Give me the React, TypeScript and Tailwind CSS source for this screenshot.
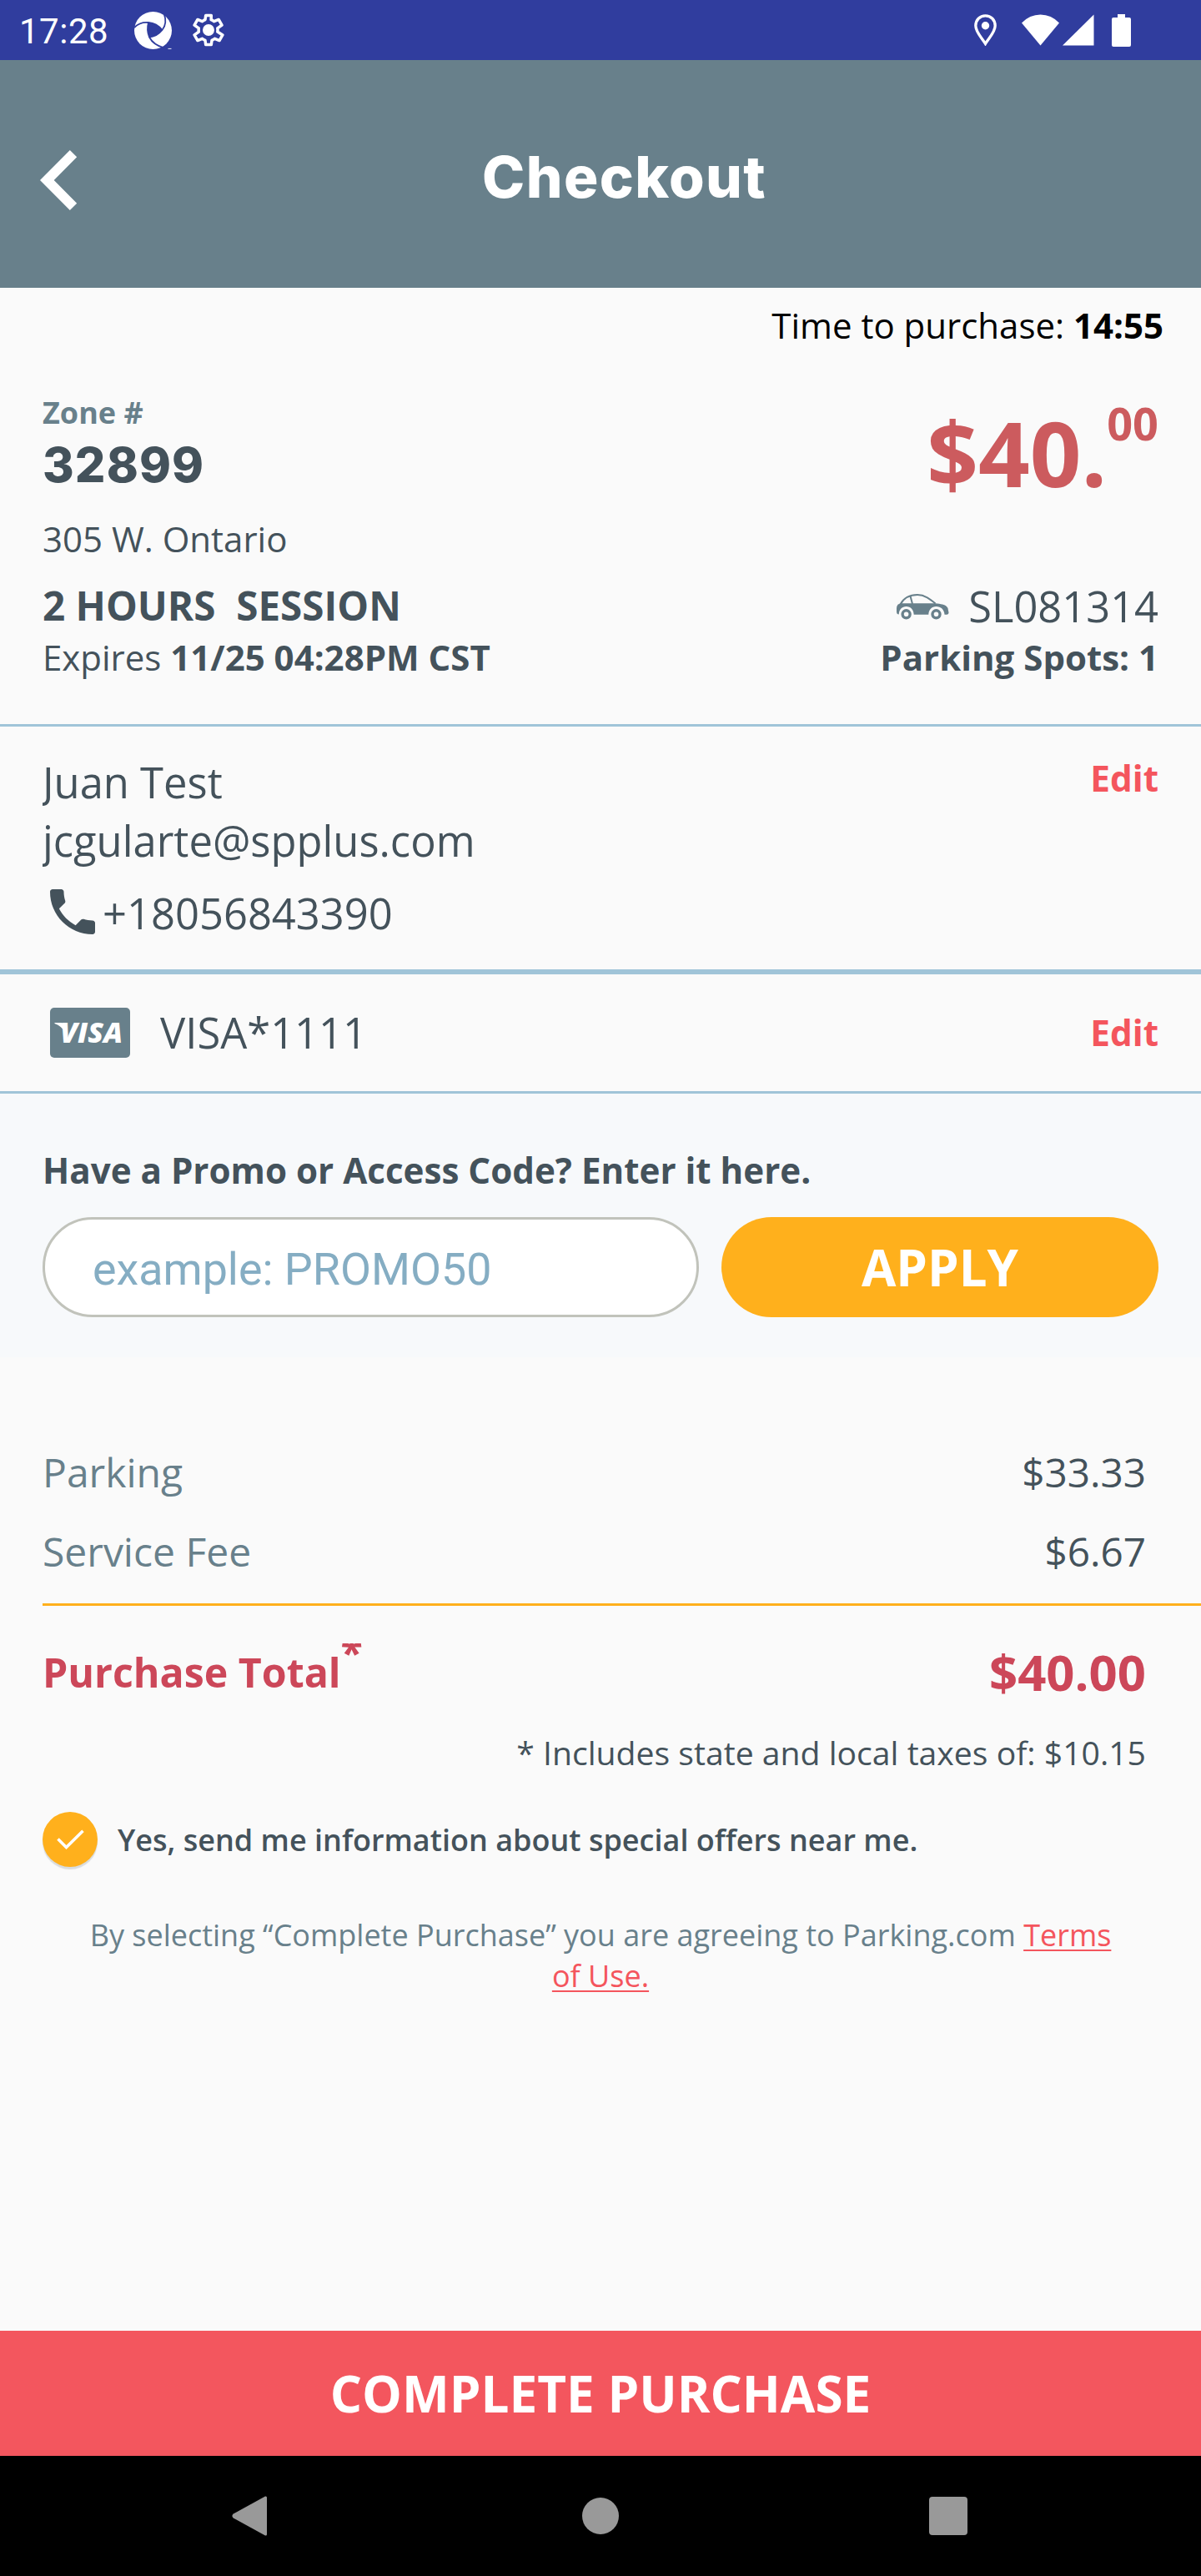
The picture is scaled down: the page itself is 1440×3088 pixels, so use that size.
import { MdPhone } from "react-icons/md";

function SwirlLogo() {
  return (
    <svg viewBox="0 0 46 45" className="h-[45px] w-[46px]" fill="none">
      <circle cx="22.5" cy="22.5" r="22.5" fill="#fff" />
      <path d="M17 13.5Q27 14 33.5 22Q27 30 18 30.5Q14.5 22 17 13.5Z" fill="#303d9e" />
      <g stroke="#303d9e" strokeWidth="1.8">
        <path d="M0 19Q7 12 17 13Q27 14 33.5 22" />
        <path d="M35.5 2Q40 14 33.5 22Q27 30 18 30.5" />
        <path d="M36 43.500Q23 40 18 30.5Q14.5 22 17 13" />
      </g>
      <path d="M40.5 44.400h4" stroke="#fff" strokeWidth="0.9" />
    </svg>
  );
}

function GearIcon() {
  return (
    <svg viewBox="0 0 24 24" className="h-[44px] w-[44px]" fill="none">
      <path
        stroke="#fff"
        strokeWidth="2"
        strokeLinejoin="round"
        transform="translate(0.6 0.6) scale(0.95)"
        d="M18.2 13.2c.1-.4.1-.8.1-1.2s0-.8-.1-1.2l3-2.2-2.2-3.8-3.2 1.3c-.6-.5-1.300-.9-2-1.200L13.900 2h-3.800l-.4 2.900c-.7.3-1.400.7-2 1.200L4.500 4.800 2.300 8.600l3 2.200c-.1.4-.1.8-.1 1.200s0 .8.1 1.200l-3 2.200 2.200 3.800 3.200-1.300c.6.5 1.300.9 2 1.200l.4 2.900h3.800l.4-2.900c.7-.3 1.400-.7 2-1.200l3.200 1.300 2.200-3.800z"
      />
      <circle cx="12" cy="12" r="3.8" fill="#fff" />
    </svg>
  );
}

function CarIcon() {
  return (
    <svg viewBox="0 0 63 31" className="h-[31px] w-[63px]" fill="none">
      <path
        d="M4.500 12.500C8.500 5 15 1 25 1C34 1 40.500 6.500 46.500 11.500"
        stroke="#68808b"
        strokeWidth="2"
      />
      <path d="M16.500 2.500L19 12" stroke="#68808b" strokeWidth="2" />
      <path
        d="M0 17Q0 11.500 6 11.200H46.500C53 12 58 12.500 60 15Q62 16.500 62 20Q63.500 24.500 60.500 24.700H57.500C57.200 18.500 53 14.900 47.500 14.900C42 14.900 38.500 19 38.300 24.700H20.700C20.500 19 17 14.900 11.600 14.900C6.500 14.900 3 18.500 2.700 24.500Q0 24.500 0 21Z"
        fill="#68808b"
      />
      <circle cx="11.600" cy="24.300" r="4.500" stroke="#68808b" strokeWidth="3.400" />
      <circle cx="47.500" cy="24.300" r="4.500" stroke="#68808b" strokeWidth="3.400" />
    </svg>
  );
}

function VisaBadge() {
  return (
    <svg viewBox="0 0 96 60" className="ml-[9px] h-[60px] w-[96px]">
      <rect width="96" height="60" rx="5" fill="#68808b" />
      <path d="M5.500 18H13.500Q15.500 18 16.200 20L18.500 30Q14 22 5.500 19Z" fill="#fff" />
      <text
        x="12"
        y="42"
        fill="#fff"
        fontFamily="Open Sans, sans-serif"
        fontSize="33.500"
        fontWeight="800"
        fontStyle="italic"
        textLength="75"
        lengthAdjust="spacingAndGlyphs"
      >
        VISA
      </text>
    </svg>
  );
}

function StatusBar() {
  return (
    <div className="flex h-[72px] items-center bg-[#303d9e] pl-[23px] pr-[84px] text-white">
      <span className="w-[138px] pt-1 font-['Roboto'] text-[42px] leading-none tracking-[0.5px]">17:28</span>
      <SwirlLogo />
      <div className="ml-[21px]">
        <GearIcon />
      </div>
      <svg viewBox="0 0 27 38" className="ml-auto h-[38px] w-[27px]" fill="none">
        <path
          d="M13.500 1.800C6.800 1.800 1.800 7 1.800 13.800C1.800 21.500 9 28 13.500 35.500C18 28 25.200 21.500 25.200 13.800C25.200 7 20.200 1.800 13.500 1.800Z"
          stroke="#fff"
          strokeWidth="3.300"
        />
        <circle cx="13.500" cy="13.800" r="4.700" fill="#fff" />
      </svg>
      <svg viewBox="0 0 45 38" className="ml-[30px] h-[38px] w-[45px]">
        <path d="M22.500 37.500L0 10.500Q9.500 0.500 22.500 0.500T45 10.500Z" fill="#fff" />
      </svg>
      <svg viewBox="0 0 38 38" className="ml-[4px] h-[38px] w-[38px]">
        <path d="M0 37.500L37.500 0.500V37.500Z" fill="#fff" />
      </svg>
      <svg viewBox="0 0 23 39" className="ml-[21px] h-[39px] w-[23px]">
        <path d="M7 0h9v4h5q2 0 2 2v31q0 2-2 2H2q-2 0-2-2V6q0-2 2-2h5z" fill="#fff" />
      </svg>
    </div>
  );
}

function Header() {
  return (
    <header className="flex h-[273px] items-start bg-[#68808b] pl-12 pr-9">
      <svg viewBox="0 0 45 72" className="mt-[108px] h-[72px] w-[45px]" fill="none">
        <path d="M40 4.200L8.300 36L40 67.800" stroke="#fff" strokeWidth="11.800" />
      </svg>
      <h1 className="mt-[100px] flex-1 text-center font-['Inter'] text-[69px] font-extrabold leading-[80px] tracking-[1.4px] text-white">
        Checkout
      </h1>
    </header>
  );
}

function Session() {
  return (
    <section className="flex justify-between border-b-[3px] border-[#a0c4d8] px-[51px] pb-[50px] pt-[50px]">
      <div className="flex flex-col pt-0.5">
        <span className="text-[36px] font-bold leading-[48px] text-[#68808b]">Zone #</span>
        <span className="mt-1 font-['Inter'] text-[57.500px] font-extrabold leading-[68px] tracking-[1.1px]">32899</span>
        <span className="mt-[25px] text-[42px] leading-[60px]">305 W. Ontario</span>
        <span className="mt-[18px] whitespace-pre text-[47.600px] font-bold leading-[64px]">2 HOURS  SESSION</span>
        <span className="text-[42px] leading-[60px]">
          Expires <b>11/25 04:28PM CST</b>
        </span>
      </div>
      <div className="flex flex-col items-end">
        <div className="flex items-start font-bold text-[#cc5b5e]">
          <span className="text-[108px] leading-[148px]">$40.</span>
          <span className="mt-[3px] text-[54px] leading-[70px]">00</span>
        </div>
        <div className="mt-20 flex items-center gap-[23px]">
          <CarIcon />
          <span className="text-[50.600px] leading-[60px]">SL081314</span>
        </div>
        <span className="mt-px text-[42px] font-bold leading-[60px]">Parking Spots: 1</span>
      </div>
    </section>
  );
}

function Edit() {
  return <button className="text-[42.300px] font-bold leading-[60px] text-[#f4555d]">Edit</button>;
}

function Contact() {
  return (
    <section className="flex items-start justify-between border-b-[6px] border-[#a0c4d8] px-[51px] pb-[33px] pt-8 text-[50.700px]">
      <div>
        <p className="overflow-x-clip leading-[70px]">Juan Test</p>
        <p className="overflow-x-clip leading-[70px]">jcgularte@spplus.com</p>
        <div className="mt-[14px] flex h-[72px] items-center">
          <MdPhone className="size-[72px]" />
          <span className="pt-1 leading-[68px]">+18056843390</span>
        </div>
      </div>
      <Edit />
    </section>
  );
}

function Card() {
  return (
    <section className="flex h-[143px] items-center border-b-[3px] border-[#a0c4d8] px-[51px]">
      <VisaBadge />
      <span className="ml-9 flex-1 text-[50.700px] leading-[70px]">VISA*1111</span>
      <Edit />
    </section>
  );
}

function Promo() {
  return (
    <section className="bg-[#f7f9fb] px-[51px] pb-12 pt-[62px]">
      <p className="text-[42.150px] font-bold leading-[60px]">Have a Promo or Access Code? Enter it here.</p>
      <div className="mt-[26px] flex gap-[27px]">
        <input
          placeholder="example: PROMO50"
          className="h-[120px] w-[787px] rounded-full border-[3px] border-[#c1c3bb] bg-white pl-[57px] pt-[5px] font-['Roboto'] text-[53.800px] placeholder:text-[#85adc3]"
        />
        <button className="h-[120px] flex-1 rounded-full bg-[#ffb01c] text-[60px] font-bold text-white">APPLY</button>
      </div>
    </section>
  );
}

function Charge({ label, amount }: { label: string; amount: string }) {
  return (
    <div className="flex justify-between pr-[66px] text-[48px] leading-[64px]">
      <span className="text-[#68808b]">{label}</span>
      <span className="text-[47.700px]">{amount}</span>
    </div>
  );
}

function Totals() {
  return (
    <section className="pl-[51px] pt-[106px]">
      <div className="flex flex-col gap-[31px] border-b-[3px] border-[#ffb01c] pb-[30px]">
        <Charge label="Parking" amount="$33.33" />
        <Charge label="Service Fee" amount="$6.67" />
      </div>
      <div className="mt-[45px] flex h-[65px] items-start justify-between pr-[66px] font-bold leading-[64px] text-[#cc4759]">
        <div className="flex items-start text-[48.300px]">
          <span className="pt-0.5">Purchase Total</span>
          {/* The footnote mark is trimmed by the top of its row. */}
          <span className="h-[30px] overflow-hidden">
            <span className="-mt-[22px] block">*</span>
          </span>
        </div>
        <span className="pt-0.5 text-[59.800px]">$40.00</span>
      </div>
      <p className="mt-[38px] pr-[66px] text-right text-[39.150px] leading-[56px]">
        * Includes state and local taxes of: $10.15
      </p>
    </section>
  );
}

function Consent() {
  return (
    <section className="mt-[43px]">
      <label className="flex items-center gap-6 pl-[51px] text-[36px] font-semibold leading-[48px]">
        <span className="flex size-[66px] items-center justify-center rounded-full bg-[#ffb01c] shadow-[0_3px_1px_#d9dcde]">
          <svg viewBox="0 0 33 24" className="h-[24px] w-[33px]" fill="none">
            <path d="M1.500 11.500L11.500 21.500L31.500 1.800" stroke="#fff" strokeWidth="3.600" />
          </svg>
        </span>
        <span className="pt-0.5">Yes, send me information about special offers near me.</span>
      </label>
      <p className="mt-[57px] px-[102px] text-center text-[36px] leading-[49px] text-[#68808b]">
        By selecting “Complete Purchase” you are agreeing to Parking.com{" "}
        <a className="text-[#f4555d] underline decoration-2 underline-offset-4">Terms of Use.</a>
      </p>
    </section>
  );
}

function NavBar() {
  return (
    <nav className="flex h-[144px] items-center justify-between bg-black pl-[278px] pr-[280px]">
      <svg viewBox="0 0 42 48" className="h-[48px] w-[42px]">
        <path d="M40 0.500Q42 0 42 2V46Q42 48 40 47.500L1.800 26.500Q-1 24 1.800 21.500Z" fill="#999" />
      </svg>
      <span className="ml-[6px] size-[44px] rounded-full bg-[#999]" />
      <span className="size-[46px] rounded-[4px] bg-[#999]" />
    </nav>
  );
}

export default function App() {
  return (
    <div className="flex h-[3088px] w-[1440px] flex-col bg-[#fafafa] font-['Open_Sans'] text-[#44525b]">
      <StatusBar />
      <Header />
      <main className="flex-1">
        <p className="-mb-px pr-[45px] pt-[15px] text-right text-[42px] leading-[60px] text-black">
          Time to purchase: <b>14:55</b>
        </p>
        <Session />
        <Contact />
        <Card />
        <Promo />
        <Totals />
        <Consent />
      </main>
      <button className="h-[150px] bg-[#f3565e] text-[60.200px] font-bold text-white">COMPLETE PURCHASE</button>
      <NavBar />
    </div>
  );
}
